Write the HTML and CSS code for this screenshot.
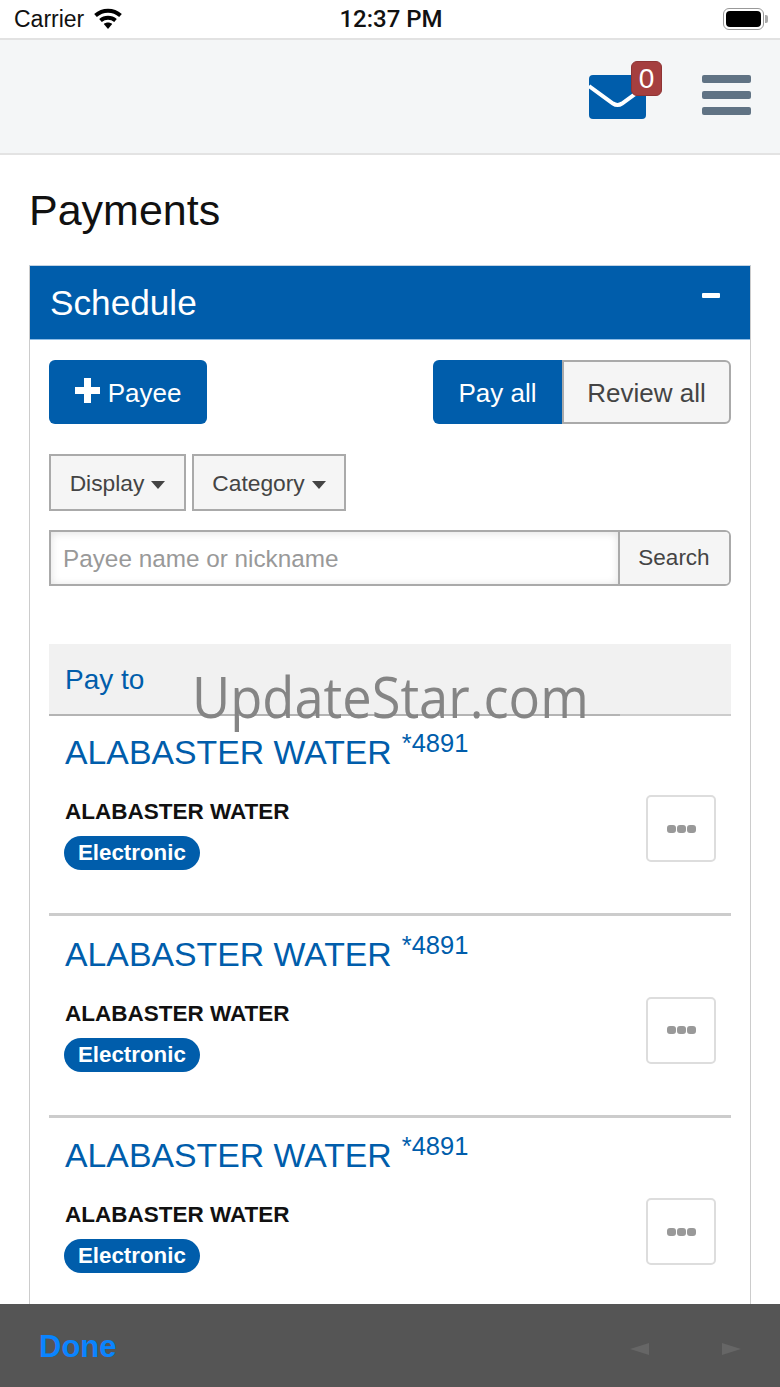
FILE: index.html
```html
<!DOCTYPE html>
<html>
<head>
  <title>Payments</title>
  <link rel="stylesheet" href="styles.css">
</head>
<body>

<div class="page">

  <!-- Status bar -->
  <div class="status-bar">
    <div class="status-left">
      <span>Carrier</span>
      <svg class="wifi" viewBox="0 0 28 21">
        <path d="M1.500 7.500C8.800 1 19.200 1 26.500 7.500" fill="none" stroke="#000" stroke-width="4"/>
        <path d="M6.500 12.500C10.800 8.800 17.200 8.800 21.500 12.500" fill="none" stroke="#000" stroke-width="4"/>
        <path d="M9.800 16C12 14 16 14 18.200 16L14 21Z" fill="#000"/>
      </svg>
    </div>
    <div class="status-time">12:37 PM</div>
    <div class="status-right">
      <div class="battery"><div class="battery-level"></div></div>
      <div class="battery-nub"></div>
    </div>
  </div>

  <!-- Top nav -->
  <div class="navbar">
    <div class="mail">
      <svg class="mail-icon" viewBox="0 0 57 44">
        <rect width="57" height="44" rx="4" fill="#005dab"/>
        <path d="M0 11L24 28.500Q28.500 31.500 33 28.500L57 11" fill="none" stroke="#fff" stroke-width="4"/>
      </svg>
      <span class="mail-count">0</span>
    </div>
    <div class="hamburger">
      <div></div>
      <div></div>
      <div></div>
    </div>
  </div>

  <div class="content">
    <h1>Payments</h1>

    <div class="panel">
      <div class="panel-head">
        <span>Schedule</span>
        <span class="collapse"></span>
      </div>

      <div class="panel-body">
        <div class="toolbar">
          <button class="btn btn-primary btn-payee">
            <svg class="plus" viewBox="0 0 25 25"><path d="M9 0h7v9h9v7h-9v9H9v-9H0V9h9z" fill="#fff"/></svg>
            Payee
          </button>
          <div class="btn-group">
            <button class="btn btn-primary btn-payall">Pay all</button>
            <button class="btn btn-review">Review all</button>
          </div>
        </div>

        <div class="filters">
          <button class="filter filter-display">Display<span class="caret"></span></button>
          <button class="filter filter-category">Category<span class="caret"></span></button>
        </div>

        <div class="search">
          <input type="text" placeholder="Payee name or nickname">
          <button>Search</button>
        </div>

        <div class="list">
          <div class="list-head">Pay to</div>
          <div class="watermark">UpdateStar.com</div>

          <div class="payee-row">
            <div>
              <div class="payee-title">ALABASTER WATER<span class="acct">*4891</span></div>
              <div class="payee-name">ALABASTER WATER</div>
              <span class="badge">Electronic</span>
            </div>
            <button class="more"><i></i><i></i><i></i></button>
          </div>

          <div class="payee-row">
            <div>
              <div class="payee-title">ALABASTER WATER<span class="acct">*4891</span></div>
              <div class="payee-name">ALABASTER WATER</div>
              <span class="badge">Electronic</span>
            </div>
            <button class="more"><i></i><i></i><i></i></button>
          </div>

          <div class="payee-row">
            <div>
              <div class="payee-title">ALABASTER WATER<span class="acct">*4891</span></div>
              <div class="payee-name">ALABASTER WATER</div>
              <span class="badge">Electronic</span>
            </div>
            <button class="more"><i></i><i></i><i></i></button>
          </div>
        </div>
      </div>
    </div>
  </div>

  <!-- Keyboard accessory bar -->
  <div class="done-bar">
    <span class="done">Done</span>
    <div class="arrows">
      <span class="arrow-prev"></span>
      <span class="arrow-next"></span>
    </div>
  </div>

</div>

</body>
</html>
```

FILE: styles.css
```css
body {
  font-family: "Liberation Sans", Arial, sans-serif;
  margin: 0;
  color: #111;
}

button, input {
  font-family: "Liberation Sans", Arial, sans-serif;
}

.page {
  display: flex;
  flex-direction: column;
  height: 1387px;
  overflow: hidden;
  background-color: white;
}

/* Status bar */
.status-bar {
  display: grid;
  grid-template-columns: 1fr auto 1fr;
  align-items: center;
  height: 38px;
  padding: 0 12px 0 14px;
  border-bottom: 2px solid #e2e2e2;
  flex: none;
}

.status-left {
  display: flex;
  align-items: center;
  gap: 10px;
  font-size: 23px;
}

.wifi {
  width: 28px;
  height: 21px;
  margin-top: -2px;
}

.status-time {
  font-family: Roboto, sans-serif;
  font-size: 24px;
  font-weight: 500;
}

.status-right {
  display: flex;
  align-items: center;
  justify-content: flex-end;
}

.battery {
  width: 41px;
  height: 22px;
  box-sizing: border-box;
  padding: 2px;
  border: 1px solid #999;
  border-radius: 6px;
}

.battery-level {
  height: 100%;
  background-color: black;
  border-radius: 4px;
}

.battery-nub {
  width: 3px;
  height: 8px;
  margin-left: 1px;
  background-color: #aaa;
  border-radius: 0 2px 2px 0;
}

/* Top nav */
.navbar {
  display: flex;
  justify-content: flex-end;
  align-items: flex-start;
  gap: 56px;
  height: 115px;
  box-sizing: border-box;
  padding: 35px 29px 0 0;
  background-color: #f4f6f7;
  border-bottom: 2px solid #e3e3e3;
  flex: none;
}

.mail {
  position: relative;
  width: 57px;
  height: 44px;
}

.mail-icon {
  display: block;
  width: 57px;
  height: 44px;
}

.mail-count {
  position: absolute;
  top: -14px;
  left: 42px;
  width: 31px;
  height: 35px;
  box-sizing: border-box;
  border: 1px solid #8f3434;
  border-radius: 6px;
  background-color: #a53f3f;
  color: white;
  font-size: 28px;
  line-height: 33px;
  text-align: center;
}

.hamburger {
  display: flex;
  flex-direction: column;
  gap: 8px;
  width: 49px;
}

.hamburger div {
  height: 8px;
  border-radius: 2px;
  background-color: #607384;
}

/* Main content */
.content {
  flex: 1;
  min-height: 0;
  overflow: hidden;
  padding: 0 29px;
}

h1 {
  margin: 30px 0;
  font-size: 43px;
  font-weight: normal;
  line-height: 50px;
}

.panel {
  border: 1px solid #ccc;
  border-top-color: #c3d3e3;
}

.panel-head {
  display: flex;
  justify-content: space-between;
  height: 74px;
  box-sizing: border-box;
  padding: 0 30px 0 20px;
  background-color: #005dab;
  border-bottom: 1px solid #8fbde6;
  color: white;
  font-size: 35.200px;
  line-height: 73px;
}

.collapse {
  width: 18px;
  height: 5px;
  margin-top: 27px;
  background-color: white;
  border-radius: 1px;
}

.panel-body {
  padding: 20px 19px 0;
}

.toolbar {
  display: flex;
  justify-content: space-between;
  height: 64px;
}

.btn {
  height: 64px;
  box-sizing: border-box;
  padding: 2px 0 0;
  border: none;
  border-radius: 6px;
  font-size: 26px;
  cursor: pointer;
}

.btn-primary {
  background-color: #005dab;
  color: white;
}

.btn-payee {
  display: flex;
  align-items: center;
  justify-content: center;
  gap: 8px;
  width: 158px;
}

.plus {
  width: 25px;
  height: 25px;
  margin-top: -6px;
}

.btn-group {
  display: flex;
}

.btn-payall {
  width: 129px;
  border-radius: 6px 0 0 6px;
}

.btn-review {
  width: 169px;
  background-color: #f5f5f5;
  border: 2px solid #aaa;
  border-radius: 0 6px 6px 0;
  color: #444;
}

.filters {
  display: flex;
  gap: 6px;
  margin-top: 30px;
}

.filter {
  height: 57px;
  padding: 2px 0 0;
  background-color: #f5f5f5;
  border: 2px solid #aaa;
  font-size: 22.800px;
  color: #444;
}

.filter-display {
  width: 137px;
}

.filter-category {
  width: 154px;
}

.caret {
  display: inline-block;
  margin-left: 7px;
  vertical-align: middle;
  border-top: 8px solid #444;
  border-left: 7px solid transparent;
  border-right: 7px solid transparent;
}

.search {
  display: flex;
  height: 56px;
  margin-top: 19px;
  box-sizing: border-box;
  border: 2px solid #aaa;
  border-radius: 0 6px 6px 0;
}

.search input {
  flex: 1;
  min-width: 0;
  padding: 2px 12px 0;
  border: none;
  outline: none;
  box-shadow: inset 0 1px 8px rgba(0,0,0,0.12);
  font-size: 24.300px;
}

.search input::placeholder {
  color: #999;
}

.search button {
  width: 111px;
  padding: 0 1px 0 0;
  background-color: #f5f5f5;
  border: none;
  border-left: 2px solid #aaa;
  border-radius: 0 4px 4px 0;
  font-size: 22.500px;
  color: #444;
}

.list {
  position: relative;
  margin-top: 58px;
}

.list-head {
  position: relative;
  height: 70px;
  padding-left: 16px;
  background-color: #f1f1f1;
  border-bottom: 2px solid #ccc;
  color: #005dab;
  font-size: 28px;
  line-height: 72px;
}

.list-head::after {
  content: "";
  position: absolute;
  left: 0;
  bottom: -2px;
  width: 571px;
  height: 2px;
  background-color: #b4b4b4;
}

.watermark {
  position: absolute;
  top: 12px;
  left: 143px;
  font-family: "Open Sans", sans-serif;
  font-size: 57px;
  line-height: 80px;
  color: #858585;
  white-space: nowrap;
  transform: scaleX(0.92);
  transform-origin: left;
}

.payee-row {
  display: flex;
  justify-content: space-between;
  align-items: flex-start;
  height: 200px;
  margin-bottom: 1.500px;
  box-sizing: border-box;
  padding: 0 15px 0 16px;
  border-bottom: 3px solid #ccc;
}

.payee-title {
  margin-top: 16px;
  color: #005dab;
  font-size: 33.800px;
  line-height: 40px;
}

.acct {
  margin-left: 10px;
  font-size: 25.500px;
  vertical-align: 12px;
  line-height: 0;
}

.payee-name {
  margin-top: 25px;
  font-size: 22.500px;
  font-weight: bold;
  line-height: 30px;
}

.badge {
  display: inline-block;
  margin: 9px 0 0 -1px;
  height: 34px;
  padding: 0 14px;
  box-sizing: border-box;
  background-color: #005dab;
  border-radius: 17px;
  color: white;
  font-size: 22.300px;
  font-weight: bold;
  line-height: 34px;
}

.more {
  display: flex;
  align-items: center;
  justify-content: center;
  gap: 1px;
  width: 70px;
  height: 67px;
  margin-top: 79px;
  padding: 0;
  background-color: white;
  border: 2px solid #ddd;
  border-radius: 5px;
}

.more i {
  width: 9px;
  height: 8px;
  background-color: #999;
  border-radius: 3px;
}

/* Keyboard accessory bar */
.done-bar {
  display: flex;
  justify-content: space-between;
  align-items: center;
  height: 83px;
  padding: 0 39px;
  background-color: #555;
  flex: none;
}

.done {
  margin-top: 2px;
  color: #0a84ff;
  font-size: 31px;
  font-weight: bold;
}

.arrows {
  display: flex;
  gap: 73px;
  margin-top: 6px;
}

.arrow-prev {
  border-top: 6px solid transparent;
  border-bottom: 6px solid transparent;
  border-right: 19px solid #666;
}

.arrow-next {
  border-top: 6px solid transparent;
  border-bottom: 6px solid transparent;
  border-left: 19px solid #666;
}
```
